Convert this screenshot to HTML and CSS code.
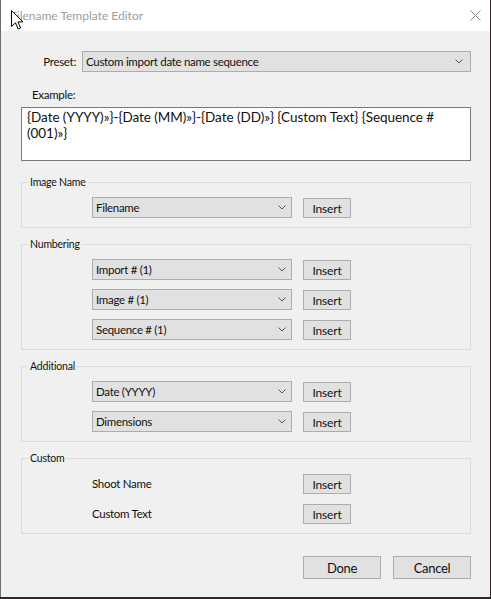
FILE: index.html
```html
<!DOCTYPE html>
<html lang="en">
<head>
    <meta charset="UTF-8">
    <title>Filename Template Editor</title>
    <link rel="stylesheet" href="styles.css">
</head>
<body>

<div class="window">
    <!-- Title bar -->
    <div class="titlebar">
        <span class="title">Filename Template Editor</span>
        <svg class="close" width="11" height="11" viewBox="0 0 11 11">
            <path d="M0.5 0.5 L10.5 10.5 M10.5 0.5 L0.5 10.5" stroke="#8a8a8a" stroke-width="1" fill="none"/>
        </svg>
    </div>

    <div class="content">
        <div class="preset-row">
            <span class="preset-label">Preset:</span>
            <div class="dropdown preset">
                <span>Custom import date name sequence</span>
                <svg class="chevron" width="8" height="5" viewBox="0 0 8 5"><polyline points="0.5,0.5 4,4 7.5,0.5" stroke="#555" fill="none"/></svg>
            </div>
        </div>

        <div class="example-label">Example:</div>
        <div class="example">{Date (YYYY)»}-{Date (MM)»}-{Date (DD)»} {Custom Text} {Sequence # (001)»}</div>

        <!-- Image Name -->
        <fieldset class="group">
            <legend>Image Name</legend>
            <div class="rows">
                <div class="row">
                    <div class="dropdown"><span>Filename</span><svg class="chevron" width="8" height="5" viewBox="0 0 8 5"><polyline points="0.5,0.5 4,4 7.5,0.5" stroke="#555" fill="none"/></svg></div>
                    <button class="insert-btn">Insert</button>
                </div>
            </div>
        </fieldset>

        <!-- Numbering -->
        <fieldset class="group">
            <legend>Numbering</legend>
            <div class="rows">
                <div class="row">
                    <div class="dropdown"><span>Import # (1)</span><svg class="chevron" width="8" height="5" viewBox="0 0 8 5"><polyline points="0.5,0.5 4,4 7.5,0.5" stroke="#555" fill="none"/></svg></div>
                    <button class="insert-btn">Insert</button>
                </div>
                <div class="row">
                    <div class="dropdown"><span>Image # (1)</span><svg class="chevron" width="8" height="5" viewBox="0 0 8 5"><polyline points="0.5,0.5 4,4 7.5,0.5" stroke="#555" fill="none"/></svg></div>
                    <button class="insert-btn">Insert</button>
                </div>
                <div class="row">
                    <div class="dropdown"><span>Sequence # (1)</span><svg class="chevron" width="8" height="5" viewBox="0 0 8 5"><polyline points="0.5,0.5 4,4 7.5,0.5" stroke="#555" fill="none"/></svg></div>
                    <button class="insert-btn">Insert</button>
                </div>
            </div>
        </fieldset>

        <!-- Additional -->
        <fieldset class="group">
            <legend>Additional</legend>
            <div class="rows">
                <div class="row">
                    <div class="dropdown"><span>Date (YYYY)</span><svg class="chevron" width="8" height="5" viewBox="0 0 8 5"><polyline points="0.5,0.5 4,4 7.5,0.5" stroke="#555" fill="none"/></svg></div>
                    <button class="insert-btn">Insert</button>
                </div>
                <div class="row">
                    <div class="dropdown"><span>Dimensions</span><svg class="chevron" width="8" height="5" viewBox="0 0 8 5"><polyline points="0.5,0.5 4,4 7.5,0.5" stroke="#555" fill="none"/></svg></div>
                    <button class="insert-btn">Insert</button>
                </div>
            </div>
        </fieldset>

        <!-- Custom -->
        <fieldset class="group">
            <legend>Custom</legend>
            <div class="rows">
                <div class="row">
                    <span class="field-name">Shoot Name</span>
                    <button class="insert-btn">Insert</button>
                </div>
                <div class="row">
                    <span class="field-name">Custom Text</span>
                    <button class="insert-btn">Insert</button>
                </div>
            </div>
        </fieldset>

        <div class="actions">
            <button class="dialog-btn">Done</button>
            <button class="dialog-btn">Cancel</button>
        </div>
    </div>

    <!-- mouse pointer over the title -->
    <svg class="cursor" width="13" height="20" viewBox="0 0 13 20">
        <path d="M0.5 0.5 L0.5 16.5 L4.5 12.8 L7.2 19 L9.6 18 L7 11.9 L12 11.9 Z" fill="#fff" stroke="#000" stroke-width="1"/>
    </svg>
</div>

</body>
</html>
```

FILE: styles.css
```css
/* General */
body {
    margin: 0;
    background-color: #2e2828;
    font-family: "Segoe UI", Lato, "Liberation Sans", sans-serif;
    font-size: 11.5px;
    letter-spacing: -0.3px;
    color: #111;
}

/* Dialog window */
.window {
    position: relative;
    width: 490px;
    height: 597px;
    box-sizing: border-box;
    background-color: #f0f0f0;
    border-left: 1px solid #6e6e6e;
}

.titlebar {
    height: 31px;
    background-color: #fff;
    display: flex;
    align-items: center;
    justify-content: space-between;
    padding: 0 9px 0 9px;
}

.title {
    color: #9d9d9d;
    font-size: 12px;
    letter-spacing: 0;
}

.cursor {
    position: absolute;
    left: 10px;
    top: 10px;
}

.content {
    padding: 20px 19px 0 20px;
}

/* Preset */
.preset-row {
    display: flex;
    align-items: center;
    gap: 6px;
}

.preset-label {
    width: 55px;
    text-align: right;
}

.dropdown {
    display: flex;
    align-items: center;
    justify-content: space-between;
    width: 200px;
    height: 21px;
    box-sizing: border-box;
    padding: 0 5px 0 3px;
    background-color: #e1e1e1;
    border: 1px solid #adadad;
}

.dropdown.preset {
    flex: 1;
    padding-right: 7px;
}

/* Example */
.example-label {
    margin-top: 15px;
    padding-left: 11px;
    line-height: 16px;
}

.example {
    margin-top: 4px;
    height: 54px;
    box-sizing: border-box;
    padding: 1px 5px;
    background-color: #fff;
    border: 1px solid #7a7a7a;
    font-size: 13.5px;
    letter-spacing: -0.05px;
    line-height: 16px;
}

/* Group boxes */
.group {
    margin: 10px 0 0 0;
    padding: 8px 0 9px 0;
    border: 1px solid #dcdcdc;
}

.example + .group {
    margin-top: 15px;
}

.group legend {
    margin-left: 6px;
    padding: 0 2px;
    font-size: 10.5px;
    letter-spacing: -0.2px;
    line-height: 13px;
}

.rows {
    display: flex;
    flex-direction: column;
    gap: 9px;
    padding-left: 70px;
}

.row {
    display: flex;
    align-items: flex-start;
    gap: 11px;
    height: 21px;
}

.field-name {
    width: 200px;
    line-height: 21px;
}

.insert-btn {
    width: 48px;
    height: 20px;
    margin-top: 1px;
    padding: 0;
    font-family: inherit;
    font-size: 12px;
    letter-spacing: -0.2px;
    color: #111;
    background-color: #e1e1e1;
    border: 1px solid #adadad;
}

/* Done / Cancel */
.actions {
    display: flex;
    justify-content: flex-end;
    gap: 12px;
    margin-top: 22px;
}

.dialog-btn {
    width: 78px;
    height: 23px;
    padding: 0;
    font-family: inherit;
    font-size: 13px;
    letter-spacing: -0.3px;
    color: #111;
    background-color: #e1e1e1;
    border: 1px solid #adadad;
}
```
